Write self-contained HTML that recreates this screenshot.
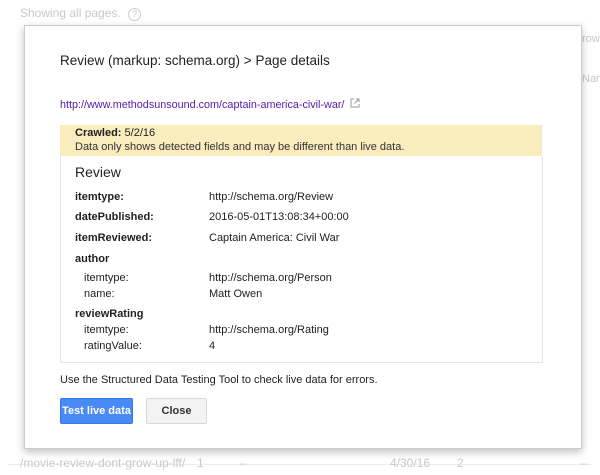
<!DOCTYPE html><html><head><style>
body{margin:0;width:600px;height:475px;background:#fff;font-family:"Liberation Sans",sans-serif;position:relative;overflow:hidden}
.a{position:absolute;white-space:nowrap}
.bg{color:#c8c8c8;font-size:12px}
#d{position:absolute;left:24px;top:25px;width:556px;height:422px;background:#fff;border:1px solid #ccc;box-shadow:0 3px 8px rgba(0,0,0,.25)}
.r{position:absolute;font-size:11px;color:#222;white-space:nowrap}
.b{font-weight:bold}
</style></head><body>
<div class="a bg" style="left:20px;top:6px;font-size:12px">Showing all pages. <span style="display:inline-block;width:11px;height:11px;border:1px solid #ccc;border-radius:50%;font-size:9px;text-align:center;line-height:11px;margin-left:4px">?</span></div>
<div class="a bg" style="left:8px;top:464px;width:584px;border-top:1px solid #eee"></div>
<div class="a bg" style="left:20px;top:456px;font-size:12px">/movie-review-dont-grow-up-lff/</div>
<div class="a bg" style="left:197px;top:456px">1</div>
<div class="a bg" style="left:240px;top:456px">–</div>
<div class="a bg" style="left:390px;top:456px">4/30/16</div>
<div class="a bg" style="left:457px;top:456px">2</div>
<div class="a bg" style="left:580px;top:456px">–</div>
<div class="a bg" style="left:582px;top:33px;font-size:11px">rows</div>
<div class="a bg" style="left:582px;top:73px;font-size:11px">Name</div>
<div id="d">
<div class="r" style="left:35px;top:27px;font-size:13.5px;color:#222">Review (markup: schema.org) &gt; Page details</div>
<div class="r" style="left:35px;top:72px;color:#551aab;font-size:10.8px">http://www.methodsunsound.com/captain-america-civil-war/ <svg width="10" height="10" viewBox="0 0 10 10" style="margin-left:3px"><path d="M4 1H1V9H9V6M6 1H9V4M9 1L4.5 5.5" fill="none" stroke="#999" stroke-width="1"/></svg></div>
<div style="position:absolute;left:35px;top:99px;width:482px;height:31px;background:#f9ecbd"></div>
<div class="r" style="left:50px;top:101px"><span class="b">Crawled:</span> 5/2/16</div>
<div class="r" style="left:50px;top:115px;color:#333">Data only shows detected fields and may be different than live data.</div>
<div style="position:absolute;left:35px;top:130px;width:481px;height:206px;border:1px solid #e4e4e4;border-top:none"></div>
<div class="r" style="left:50px;top:138px;font-size:14px">Review</div>
<div class="r b" style="left:50px;top:165px">itemtype:</div><div class="r" style="left:184px;top:165px">http://schema.org/Review</div>
<div class="r b" style="left:50px;top:185px">datePublished:</div><div class="r" style="left:184px;top:185px">2016-05-01T13:08:34+00:00</div>
<div class="r b" style="left:50px;top:206px">itemReviewed:</div><div class="r" style="left:184px;top:206px">Captain America: Civil War</div>
<div class="r b" style="left:50px;top:227px">author</div>
<div class="r" style="left:59px;top:246px">itemtype:</div><div class="r" style="left:184px;top:246px">http://schema.org/Person</div>
<div class="r" style="left:59px;top:262px">name:</div><div class="r" style="left:184px;top:262px">Matt Owen</div>
<div class="r b" style="left:50px;top:282px">reviewRating</div>
<div class="r" style="left:59px;top:298px">itemtype:</div><div class="r" style="left:184px;top:298px">http://schema.org/Rating</div>
<div class="r" style="left:59px;top:314px">ratingValue:</div><div class="r" style="left:184px;top:314px">4</div>
<div class="r" style="left:35px;top:348px">Use the Structured Data Testing Tool to check live data for errors.</div>
<div style="position:absolute;left:35px;top:372px;width:71px;height:24px;background:#4a8af4;border:1px solid #3079ed;border-radius:2px;color:#fff;font-size:11px;font-weight:bold;text-align:center;line-height:24px">Test live data</div>
<div style="position:absolute;left:121px;top:372px;width:59px;height:24px;background:#f3f3f3;border:1px solid #d8d8d8;border-radius:2px;color:#333;font-size:11px;font-weight:bold;text-align:center;line-height:24px">Close</div>
</div>
</body></html>
